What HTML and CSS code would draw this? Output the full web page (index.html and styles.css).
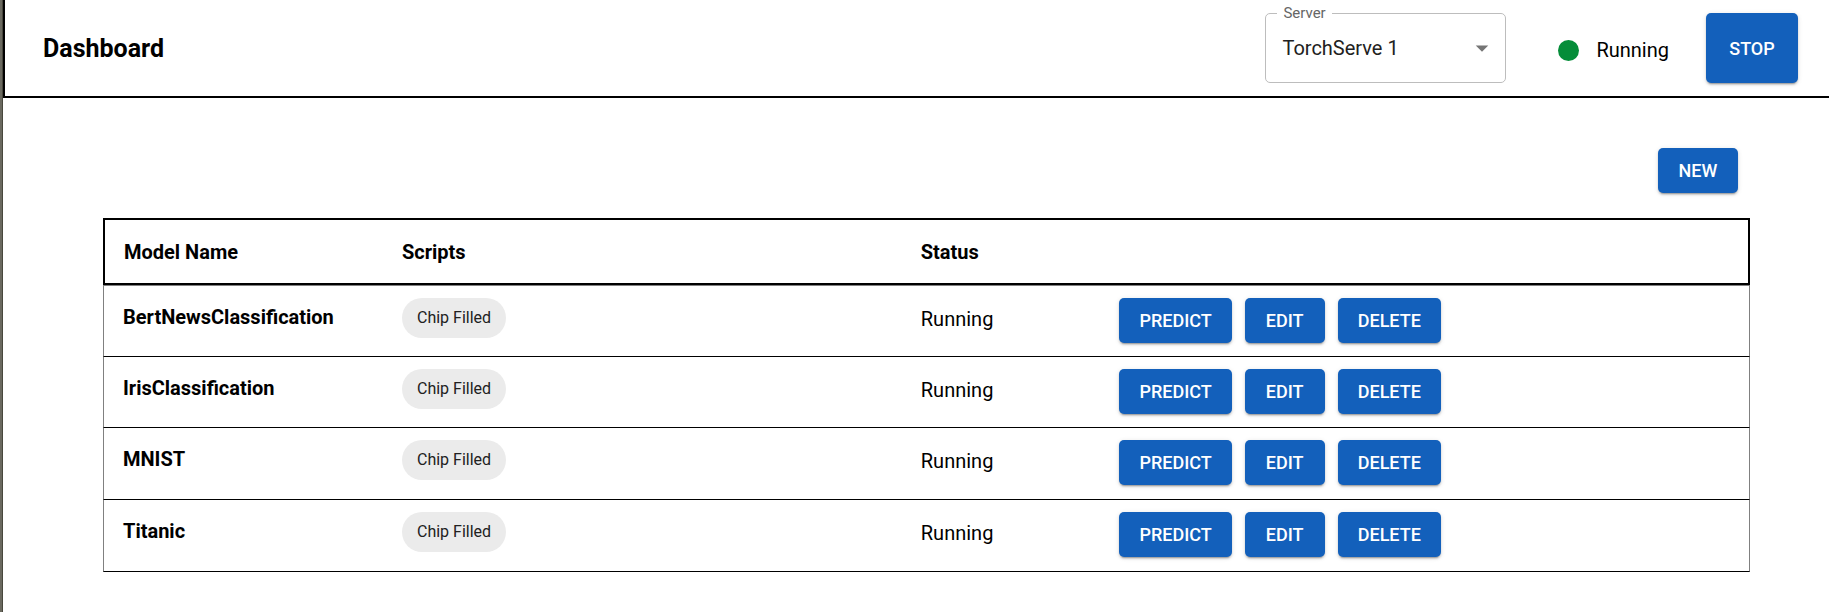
FILE: index.html
```html
<!DOCTYPE html>
<html lang="en">
<head>
<meta charset="utf-8">
<meta name="viewport" content="width=device-width, initial-scale=1">
<title>Dashboard</title>
<link rel="stylesheet" href="styles.css">
</head>
<body>
<div class="app">
  <header class="topbar">
    <h1 class="title">Dashboard</h1>
    <fieldset class="field">
      <legend class="field-legend"><label for="server">Server</label></legend>
      <select class="field-select" id="server"><option>TorchServe 1</option></select>
      <svg class="field-arrow" viewBox="0 0 24 24" aria-hidden="true"><path d="M7 10l5 5 5-5z"/></svg>
    </fieldset>
    <div class="status"><span class="dot"></span><span>Running</span></div>
    <button class="btn btn-stop" type="button">STOP</button>
  </header>
  <main class="content">
    <div class="toolbar"><button class="btn" type="button">NEW</button></div>
    <table class="models">
      <colgroup><col class="col-name"><col class="col-scripts"><col class="col-status"><col></colgroup>
      <thead>
        <tr><th scope="col">Model Name</th><th scope="col">Scripts</th><th scope="col">Status</th><td></td></tr>
      </thead>
      <tbody>
        <tr>
          <th scope="row">BertNewsClassification</th>
          <td><span class="chip">Chip Filled</span></td>
          <td class="state">Running</td>
          <td><div class="actions"><button class="btn" type="button">PREDICT</button><button class="btn" type="button">EDIT</button><button class="btn" type="button">DELETE</button></div></td>
        </tr>
        <tr>
          <th scope="row">IrisClassification</th>
          <td><span class="chip">Chip Filled</span></td>
          <td class="state">Running</td>
          <td><div class="actions"><button class="btn" type="button">PREDICT</button><button class="btn" type="button">EDIT</button><button class="btn" type="button">DELETE</button></div></td>
        </tr>
        <tr>
          <th scope="row">MNIST</th>
          <td><span class="chip">Chip Filled</span></td>
          <td class="state">Running</td>
          <td><div class="actions"><button class="btn" type="button">PREDICT</button><button class="btn" type="button">EDIT</button><button class="btn" type="button">DELETE</button></div></td>
        </tr>
        <tr>
          <th scope="row">Titanic</th>
          <td><span class="chip">Chip Filled</span></td>
          <td class="state">Running</td>
          <td><div class="actions"><button class="btn" type="button">PREDICT</button><button class="btn" type="button">EDIT</button><button class="btn" type="button">DELETE</button></div></td>
        </tr>
      </tbody>
    </table>
  </main>
</div>
</body>
</html>
```
FILE: styles.css
```css
* { box-sizing: border-box; }

body {
  margin: 0;
  background: #fff;
  color: #000;
  font-family: Roboto, "Liberation Sans", sans-serif;
  font-size: 20px;
}

.app {
  min-height: 100vh;
  padding-left: 3px;
  background: linear-gradient(to right, #6a695f 2px, #48473d 2px, #48473d 3px, #fff 3px);
}

/* Top bar */
.topbar {
  display: flex;
  align-items: flex-end;
  padding: 4px 31px 13px 38px;
  border-left: 2px solid #000;
  border-bottom: 2px solid #000;
}

.title {
  flex: 1;
  margin: 0;
  font-size: 25px;
  font-weight: 700;
  line-height: 68px;
}

.field {
  position: relative;
  width: 241px;
  margin: 0;
  padding: 0 11px;
  border: 1px solid #bdbdbd;
  border-radius: 5px;
}

.field-legend {
  padding: 0 6px;
  color: #666;
  font-size: 15px;
  line-height: 18px;
}

.field-select {
  display: block;
  width: 100%;
  height: 60px;
  padding: 0 5px 8px;
  border: 0;
  appearance: none;
  background: transparent;
  color: #212121;
  font: inherit;
}

.field-arrow {
  position: absolute;
  top: 11px;
  right: 8px;
  width: 30px;
  height: 30px;
  fill: #757575;
  pointer-events: none;
}

.status {
  display: flex;
  align-items: center;
  gap: 17px;
  height: 66px;
  margin: 0 37px 0 52px;
}

.dot {
  width: 21px;
  height: 21px;
  border-radius: 50%;
  background: #058d39;
}

/* Buttons */
.btn {
  min-width: 80px;
  height: 45px;
  padding: 0 20px;
  border: 0;
  border-radius: 5px;
  background: #1360bb;
  color: #fff;
  font-family: inherit;
  font-size: 18px;
  font-weight: 500;
  box-shadow: 0 3px 1px -2px rgba(0, 0, 0, .2), 0 2px 2px rgba(0, 0, 0, .14), 0 1px 5px rgba(0, 0, 0, .12);
}

.btn-stop {
  min-width: 92px;
  height: 70px;
}

/* Model list */
.content { padding: 50px 79px 40px 100px; }

.toolbar {
  display: flex;
  justify-content: flex-end;
  padding: 0 12px 25px;
}

.models {
  width: 100%;
  table-layout: fixed;
  border-collapse: separate;
  border-spacing: 0;
}

.col-name { width: 17%; }
.col-scripts { width: 31.5%; }
.col-status { width: 12%; }

.models th,
.models td {
  padding: 0 19px;
  text-align: left;
}

.models thead th,
.models thead td {
  height: 67px;
  border: solid #000;
  border-width: 2px 0;
  line-height: 26px;
}

.models thead tr :first-child { border-left-width: 2px; }
.models thead tr :last-child { border-right-width: 2px; }

.models tbody th,
.models tbody td {
  height: 71px;
  padding-top: 12px;
  border-bottom: 1px solid #000;
  vertical-align: top;
}

.models tbody tr:first-child > * {
  height: 72px;
  border-top: 1px solid #808080;
}

.models tbody tr:nth-child(n+3) > * { height: 72px; }

.models tbody tr > :first-child { border-left: 1px solid #808080; }
.models tbody tr > :last-child {
  padding-left: 20px;
  border-right: 1px solid #808080;
}

.models tbody th { line-height: 38px; }
.models .state { line-height: 42px; }

.chip {
  display: block;
  width: max-content;
  padding: 0 15px;
  border-radius: 20px;
  background: #ebebeb;
  color: #212121;
  font-size: 16px;
  line-height: 40px;
}

.actions {
  display: flex;
  gap: 13px;
}
```
